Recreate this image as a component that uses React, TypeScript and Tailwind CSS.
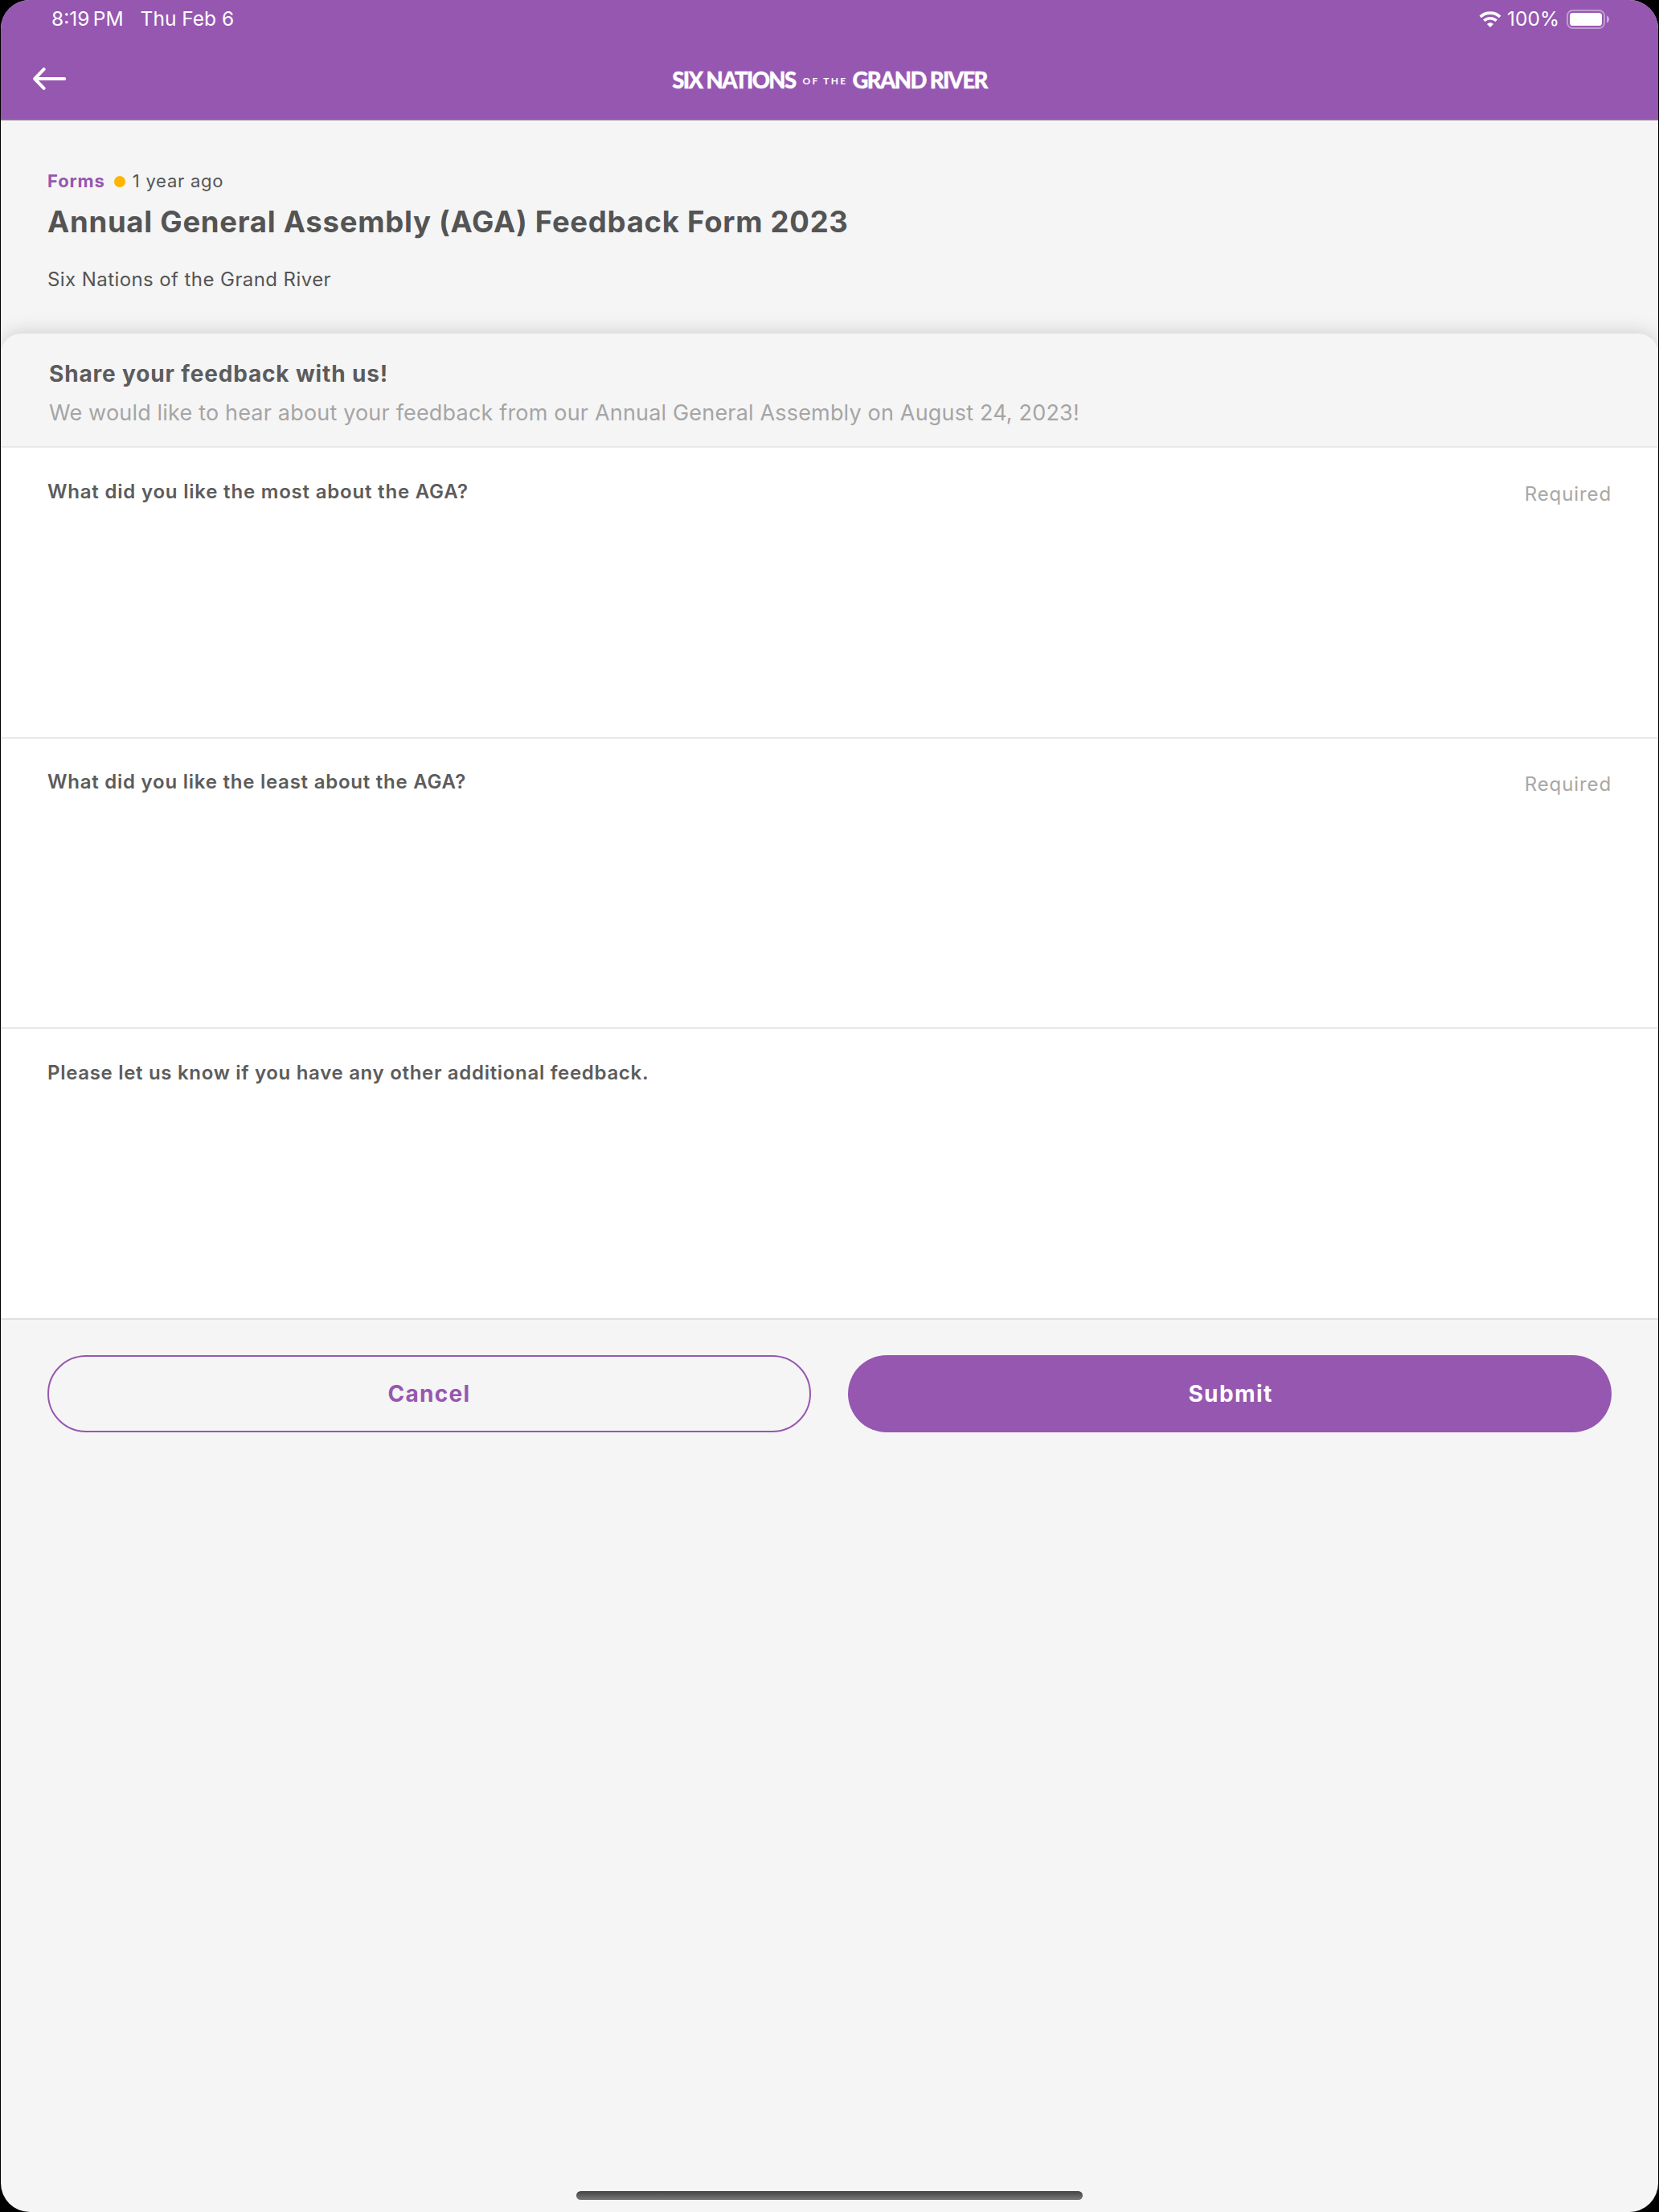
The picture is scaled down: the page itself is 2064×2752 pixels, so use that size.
import React, { useState } from "react";

interface IQuestion {
  id: string;
  label: string;
  required: boolean;
  className: string;
}

const questions: IQuestion[] = [
  {
    id: "most",
    label: "What did you like the most about the AGA?",
    required: true,
    className: "h-[362px] border-[#e8e8e8] pt-[39px] tracking-[0.8px]",
  },
  {
    id: "least",
    label: "What did you like the least about the AGA?",
    required: true,
    className: "h-[361px] border-[#e8e8e8] pt-[38px] tracking-[0.76px]",
  },
  {
    id: "other",
    label: "Please let us know if you have any other additional feedback.",
    required: false,
    className: "h-[362px] border-[#e0e0e0] pt-[39px] tracking-[0.69px]",
  },
];

function WifiIcon() {
  return (
    <svg width="28" height="20" viewBox="0 0 28 20" fill="none">
      <path
        d="M1.8 7C8.5 0.4 19.5 0.4 26.2 7"
        stroke="white"
        strokeWidth="3.8"
      />
      <path
        d="M6.3 11.8C10.6 7.7 17.4 7.7 21.7 11.8"
        stroke="white"
        strokeWidth="3.6"
      />
      <path
        d="M14 20L10 16C12.2 13.6 15.8 13.6 18 16Z"
        fill="white"
      />
    </svg>
  );
}

function BatteryIcon() {
  return (
    <svg width="54" height="24" viewBox="0 0 54 24" fill="none">
      <rect
        x="1"
        y="1"
        width="46"
        height="22"
        rx="6.5"
        stroke="white"
        strokeOpacity="0.4"
        strokeWidth="2"
      />
      <rect x="4" y="4" width="40" height="16" rx="3.6" fill="white" />
      <path
        d="M50 7.5C51.8 8.2 53 10 53 12C53 14 51.8 15.8 50 16.5Z"
        fill="white"
        fillOpacity="0.5"
      />
    </svg>
  );
}

function BackIcon() {
  return (
    <svg width="42" height="28" viewBox="0 0 42 28" fill="none">
      <path
        d="M13.6 2.2L2.2 14L13.6 25.8M2.2 14H39.2"
        stroke="white"
        strokeWidth="4"
        strokeLinecap="round"
        strokeLinejoin="round"
      />
    </svg>
  );
}

function Header() {
  return (
    <header className="h-[150px] border-b border-[#ada3b3] bg-[#9657b1] text-white">
      <div className="flex h-[47px] items-center justify-between pr-[60px] pl-[63px] text-[24.5px] leading-none">
        <div className="flex gap-[21px]">
          <span>8:19{"\u2009"}PM</span>
          <span>Thu Feb 6</span>
        </div>
        <div className="flex items-center">
          <WifiIcon />
          <span className="ml-[7px]">100%</span>
          <span className="ml-[9px]">
            <BatteryIcon />
          </span>
        </div>
      </div>
      <div className="grid h-[102px] grid-cols-[1fr_auto_1fr] items-center">
        <button className="pl-[40px]">
          <BackIcon />
        </button>
        <div className="flex items-center pt-[3px] font-[Lato,sans-serif] leading-none font-black">
          <span className="text-[27.5px] tracking-[-1.6px] [-webkit-text-stroke:0.4px_white]">
            SIX NATIONS
          </span>
          <span className="ml-[9px] pt-[2px] text-[12px] font-bold tracking-[2.3px]">
            OF THE
          </span>
          <span className="ml-[6px] text-[27.5px] tracking-[-1.6px] [-webkit-text-stroke:0.4px_white]">
            GRAND RIVER
          </span>
        </div>
      </div>
    </header>
  );
}

export default function App() {
  const [answers, setAnswers] = useState<Record<string, string>>({});

  return (
    <div className="h-[2752px] w-[2064px] bg-black px-px font-[Inter,sans-serif]">
      <div className="relative h-full overflow-hidden rounded-[36px] bg-[#f5f5f5]">
        <Header />
        <div className="h-[265px] px-[58px] pt-[60px] text-[#545454]">
          <div className="flex h-[30px] items-center text-[22px]">
            <span className="font-bold tracking-[0.9px] text-[#9657b1]">
              Forms
            </span>
            <span className="mt-[2px] ml-[11px] h-[14px] w-[14px] rounded-full bg-[#ffb400]"></span>
            <span className="ml-[9px] tracking-[0.75px]">1 year ago</span>
          </div>
          <h1 className="text-[36.5px] leading-[72px] font-bold tracking-[0.73px]">
            Annual General Assembly (AGA) Feedback Form 2023
          </h1>
          <p className="text-[24px] leading-[71px] tracking-[0.42px]">
            Six Nations of the Grand River
          </p>
        </div>

        <div className="h-[142px] rounded-t-[25px] border-b-2 border-[#e8e8e8] bg-[#f5f5f5] px-[60px] pt-[30px] shadow-[0_0_26px_rgba(0,0,0,0.18)]">
          <h2 className="text-[28px] leading-[40px] font-bold tracking-[0.84px] text-[#5c5c5c]">
            Share your feedback with us!
          </h2>
          <p className="text-[27px] leading-[58px] tracking-[0.18px] text-[#a5a5a5]">
            We would like to hear about your feedback from our Annual General
            Assembly on August 24, 2023!
          </p>
        </div>

        {questions.map((q) => (
          <div
            key={q.id}
            className={`flex flex-col border-b-2 bg-white px-[58px] ${q.className}`}
          >
            <div className="flex items-start justify-between text-[24px] leading-[32px]">
              <label
                htmlFor={q.id}
                className="font-semibold text-[#5c5c5c]"
              >
                {q.label}
              </label>
              {q.required && (
                <span className="pt-[3px] tracking-[0.9px] text-[#a8a8a8]">
                  Required
                </span>
              )}
            </div>
            <textarea
              id={q.id}
              value={answers[q.id] ?? ""}
              onChange={(e) =>
                setAnswers({ ...answers, [q.id]: e.target.value })
              }
              className="w-full flex-1 resize-none text-[24px] outline-none"
            />
          </div>
        ))}

        <div className="grid grid-cols-2 gap-[46px] px-[58px] pt-[44px] text-[28px] font-bold">
          <button className="h-[96px] rounded-full border-2 border-[#9657b1] tracking-[1.3px] text-[#9657b1]">
            Cancel
          </button>
          <button className="h-[96px] rounded-full bg-[#9657b1] pl-[2px] tracking-[1.4px] text-white">
            Submit
          </button>
        </div>

        <div className="absolute bottom-[15px] left-1/2 h-[11px] w-[630px] -translate-x-1/2 rounded-full bg-linear-to-b from-[#444444] to-[#7a7a7a]"></div>
      </div>
    </div>
  );
}
